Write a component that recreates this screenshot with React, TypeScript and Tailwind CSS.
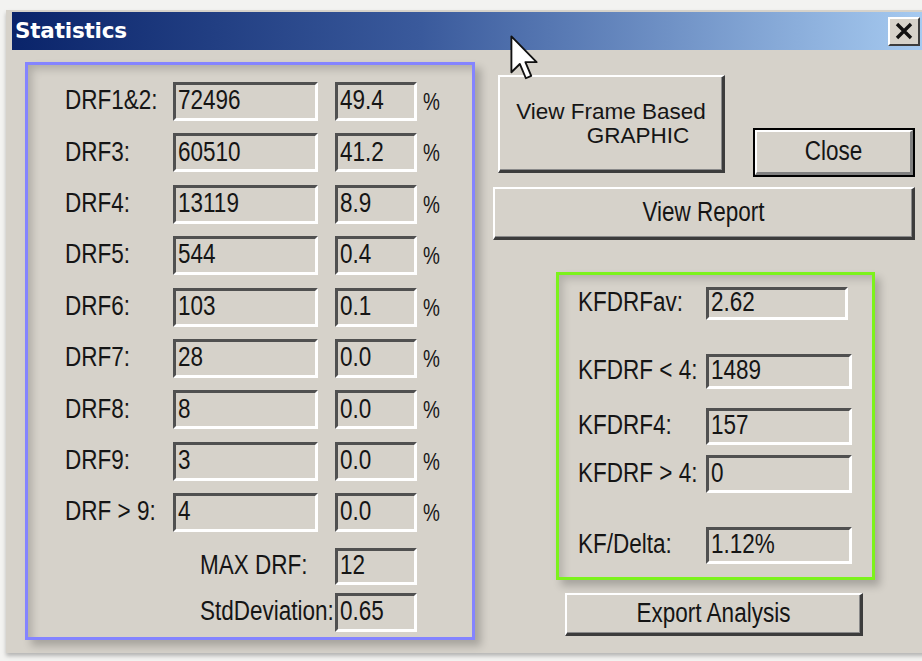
const sans = "font-['Liberation_Sans',Arial,sans-serif]";

const drfRows = [
  { label: "DRF1&2:", count: "72496", pct: "49.4" },
  { label: "DRF3:", count: "60510", pct: "41.2" },
  { label: "DRF4:", count: "13119", pct: "8.9" },
  { label: "DRF5:", count: "544", pct: "0.4" },
  { label: "DRF6:", count: "103", pct: "0.1" },
  { label: "DRF7:", count: "28", pct: "0.0" },
  { label: "DRF8:", count: "8", pct: "0.0" },
  { label: "DRF9:", count: "3", pct: "0.0" },
  { label: "DRF > 9:", count: "4", pct: "0.0" },
];

// dialog text is drawn a bit taller than the plain font
const T = ({ children }: { children: React.ReactNode }) => (
  <span className="inline-block scale-y-[1.2] whitespace-nowrap">{children}</span>
);

// sunken read-only edit box
const Field = ({ value, className = "" }: { value: string; className?: string }) => (
  <div
    className={`flex items-center border-[3px] border-t-[#505050] border-l-[#505050] border-b-white border-r-white pl-[2px] text-[22.5px] leading-none ${className}`}
  >
    <T>{value}</T>
  </div>
);

// raised push button
const Btn = ({ children, className = "" }: { children: React.ReactNode; className?: string }) => (
  <div
    className={`flex items-center justify-center border-t-2 border-l-2 border-t-white border-l-white border-r-[3px] border-b-[3px] border-r-[#3c3c3c] border-b-[#3c3c3c] shadow-[inset_-1px_-1px_0_#8a8a8a] text-[22.5px] leading-none ${className}`}
  >
    {children}
  </div>
);

const Label = ({ children, className = "" }: { children: React.ReactNode; className?: string }) => (
  <div className={`text-[22.5px] leading-none ${className}`}>
    <T>{children}</T>
  </div>
);

const App = () => {
  return (
    <div className={`relative w-[922px] h-[661px] overflow-hidden bg-[#f3f3f1] pt-[10px] pl-[6px] text-[#151515] ${sans}`}>
      <div className="w-[930px] h-[643px] bg-[#d6d2ca] pl-[6px] pt-[2px] shadow-[0_3px_4px_rgba(0,0,0,0.25)]">
        {/* title bar */}
        <div className="flex items-center h-[38px] w-[910px] bg-[linear-gradient(90deg,#0a246a_0%,#3a5a9c_45%,#a6caf0_100%)]">
          <div className="pl-[3px] text-white font-bold text-[21.5px] font-['DejaVu_Sans',Verdana,sans-serif] tracking-[-0.2px]">
            Statistics
          </div>
          <div className="ml-auto mr-[2px] w-[32px] h-[29px] bg-[#d6d2ca] border-t-2 border-l-2 border-t-white border-l-white border-r-2 border-b-2 border-r-[#3c3c3c] border-b-[#3c3c3c] flex items-center justify-center">
            <svg width="20" height="18" viewBox="0 0 20 18">
              <path d="M3 2 L17 16 M17 2 L3 16" stroke="#111" strokeWidth="3.4" />
            </svg>
          </div>
        </div>

        {/* dialog body */}
        <div className="flex items-start">
          <div className="ml-[13px] mt-[12px] w-[450px] h-[578px] border-[3px] border-[#8484ff] shadow-[6px_6px_8px_rgba(0,0,0,0.22),inset_6px_6px_8px_-2px_rgba(0,0,0,0.18)] pl-[37px] pt-[17px]">
            <div className="flex flex-col gap-[12.4px]">
              {drfRows.map((r) => (
                <div key={r.label} className="flex items-center h-[39px]">
                  <Label className="w-[108px]">{r.label}</Label>
                  <Field value={r.count} className="w-[145px] h-full" />
                  <Field value={r.pct} className="ml-[17px] w-[82px] h-full" />
                  <div className="ml-[6px] text-[19px] leading-none">
                    <span className="inline-block scale-y-[1.3]">%</span>
                  </div>
                </div>
              ))}
            </div>
            <div className="flex items-center h-[37px] mt-[16px] pl-[135px]">
              <Label className="w-[135px]">MAX DRF:</Label>
              <Field value="12" className="w-[82px] h-full" />
            </div>
            <div className="flex items-center h-[39px] mt-[8px] pl-[135px]">
              <Label className="w-[135px]">StdDeviation:</Label>
              <Field value="0.65" className="w-[82px] h-full" />
            </div>
          </div>

          <div className="ml-[18px] w-[422px] flex flex-col items-start">
            <div className="flex items-start">
              <Btn className="ml-[5px] mt-[25px] w-[227px] h-[98px] flex-col gap-[3px] text-[21.5px]">
                <div className="leading-[21.5px] whitespace-nowrap">View Frame Based</div>
                <div className="leading-[21.5px] pl-[54px] whitespace-nowrap">GRAPHIC</div>
              </Btn>
              <div className="ml-[28px] mt-[78px] w-[162px] h-[49px] border-2 border-black">
                <Btn className="w-full h-full border-r-2 border-b-2 border-r-[#808080] border-b-[#808080] shadow-none">
                  <T>Close</T>
                </Btn>
              </div>
            </div>
            <Btn className="mt-[10px] w-[422px] h-[53px]">
              <T>View Report</T>
            </Btn>

            <div className="ml-[63px] mt-[32px] w-[319px] h-[308px] border-[3px] border-[#7cf21c] shadow-[5px_6px_8px_rgba(0,0,0,0.22),inset_6px_6px_8px_-2px_rgba(0,0,0,0.16)] pl-[19px]">
              <div className="flex items-center mt-[12px] h-[33px]">
                <Label className="w-[128px]">KFDRFav:</Label>
                <Field value="2.62" className="w-[142px] h-full" />
              </div>
              <div className="flex items-center mt-[34px] h-[35px]">
                <Label className="w-[128px]">KFDRF &lt; 4:</Label>
                <Field value="1489" className="w-[146px] h-full" />
              </div>
              <div className="flex items-center mt-[19px] h-[37px]">
                <Label className="w-[128px]">KFDRF4:</Label>
                <Field value="157" className="w-[146px] h-full" />
              </div>
              <div className="flex items-center mt-[10px] h-[38px]">
                <Label className="w-[128px]">KFDRF &gt; 4:</Label>
                <Field value="0" className="w-[146px] h-full" />
              </div>
              <div className="flex items-center mt-[34px] h-[37px]">
                <Label className="w-[128px]">KF/Delta:</Label>
                <Field value="1.12%" className="w-[146px] h-full" />
              </div>
            </div>

            <Btn className="ml-[72px] mt-[13px] w-[298px] h-[43px]">
              <T>Export Analysis</T>
            </Btn>
          </div>
        </div>
      </div>

      {/* mouse pointer */}
      <svg
        className="absolute left-[510px] top-[35px]"
        width="28"
        height="46"
        viewBox="0 0 12 20"
        preserveAspectRatio="none"
      >
        <path
          d="M0.6 0.6 L0.6 16.2 L4.2 12.6 L6.8 18.8 L9.1 17.8 L6.6 11.8 L11.4 11.8 Z"
          fill="white"
          stroke="#111"
          strokeWidth="0.8"
          strokeLinejoin="round"
        />
      </svg>
    </div>
  );
};

export default App;
